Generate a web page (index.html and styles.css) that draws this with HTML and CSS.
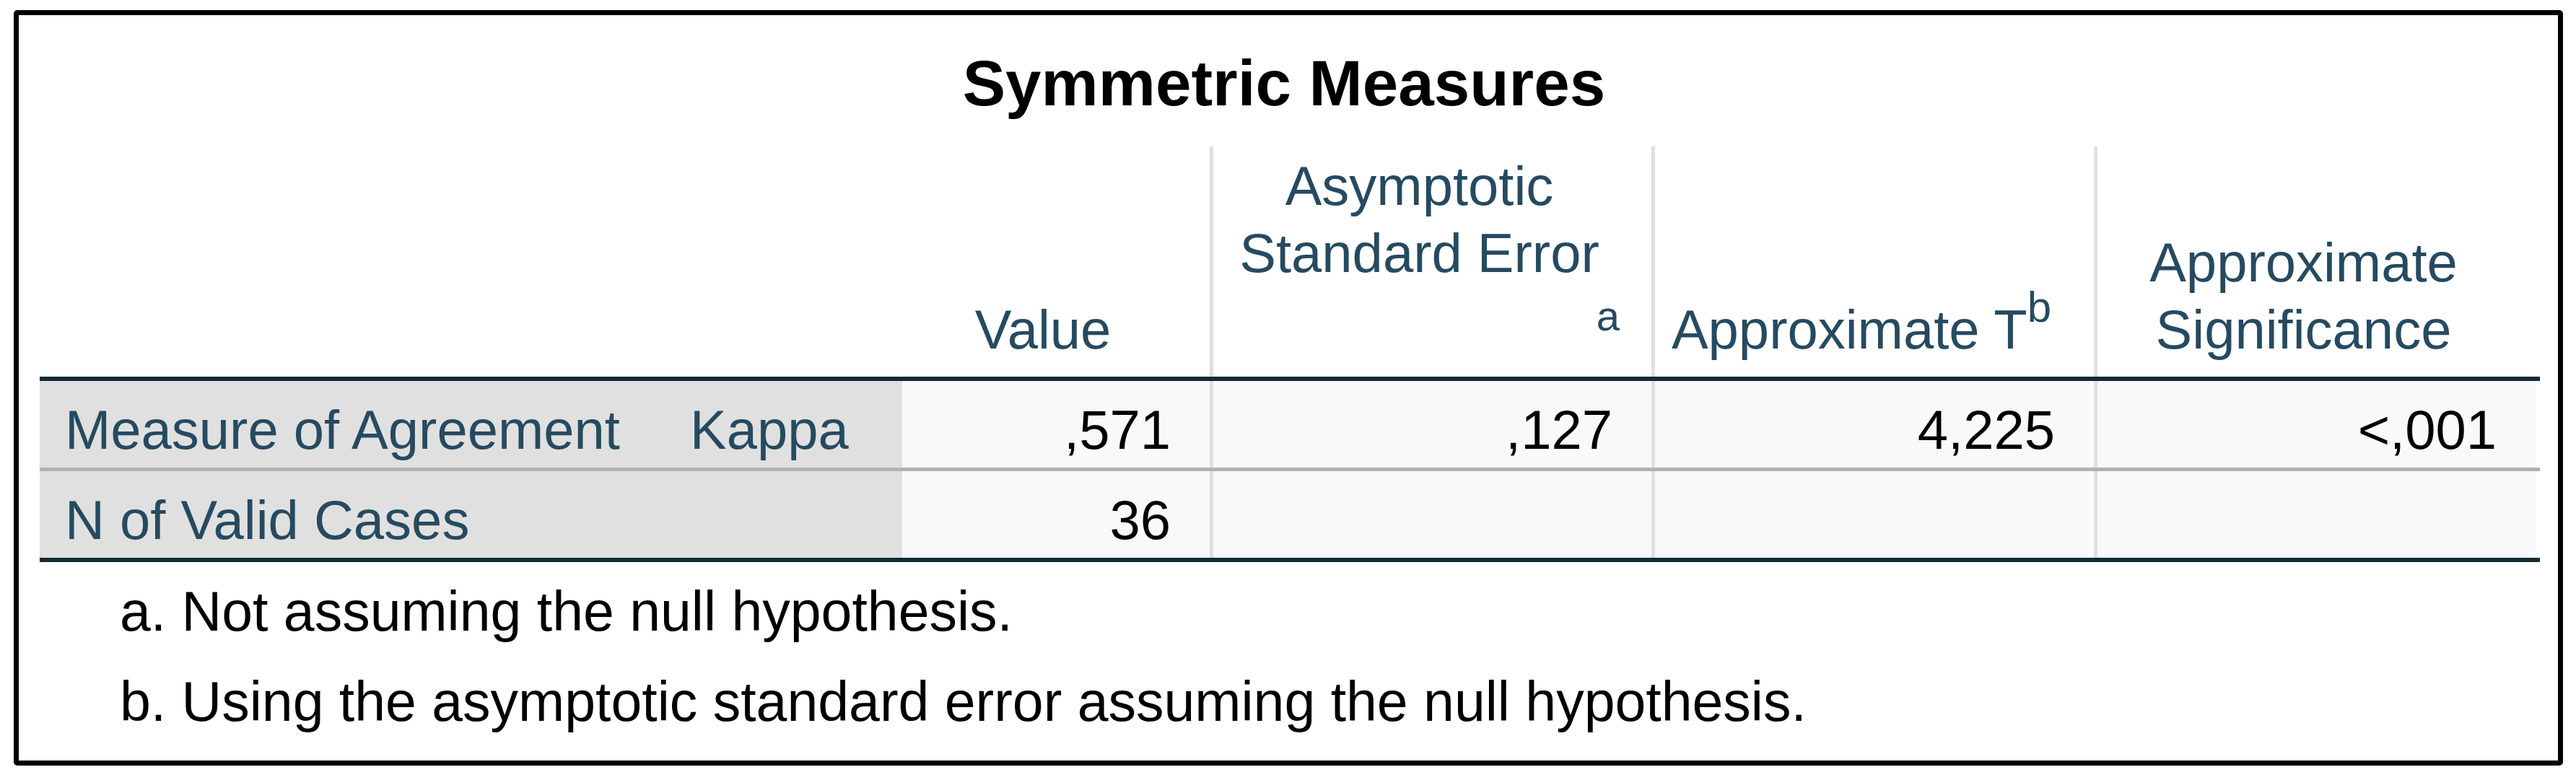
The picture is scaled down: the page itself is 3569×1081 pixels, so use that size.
FILE: index.html
```html
<!DOCTYPE html>
<html lang="en">
<head>
<meta charset="utf-8">
<title>Symmetric Measures</title>
<link rel="stylesheet" href="styles.css">
</head>
<body>
<div class="frame">
  <div class="title">Symmetric Measures</div>
  <div class="grid">
    <div class="hcell corner"></div>
    <div class="hcell">Value</div>
    <div class="hcell sep-l">
      <div>Asymptotic<br>Standard Error</div>
      <div class="supline">a</div>
    </div>
    <div class="hcell sep-l nowrap">
      <div>Approximate T<span class="sup">b</span></div>
    </div>
    <div class="hcell sep-l last">
      <div>Approximate<br>Significance</div>
    </div>

    <div class="rule-dark"></div>

    <div class="stub">Measure of Agreement</div>
    <div class="stub">Kappa</div>
    <div class="data">,571</div>
    <div class="data sep-l">,127</div>
    <div class="data sep-l">4,225</div>
    <div class="data sep-l last">&lt;,001</div>

    <div class="rule-light"></div>

    <div class="stub wide">N of Valid Cases</div>
    <div class="data">36</div>
    <div class="data sep-l"></div>
    <div class="data sep-l"></div>
    <div class="data sep-l last"></div>

    <div class="rule-dark"></div>
  </div>
  <div class="notes">
    <div>a. Not assuming the null hypothesis.</div>
    <div>b. Using the asymptotic standard error assuming the null hypothesis.</div>
  </div>
</div>
</body>
</html>
```

FILE: styles.css
```css
* {
  box-sizing: border-box;
}

body {
  margin: 0;
  background: #ffffff;
  font-family: "Liberation Sans", Arial, sans-serif;
}

.frame {
  width: 3532px;
  margin: 14px 0 0 19px;
  border: 7px solid #000000;
  border-radius: 5px;
  padding: 44px 25px 19px 29px;
  background: #ffffff;
}

.title {
  font-weight: bold;
  font-size: 89px;
  line-height: 100px;
  text-align: center;
  color: #000000;
  padding-right: 16px;
  margin-bottom: 38px;
}

.grid {
  display: grid;
  grid-template-columns: 866px 329px 426px 612px 613px 618px;
  font-size: 76px;
}

.hcell {
  display: flex;
  flex-direction: column;
  justify-content: flex-end;
  padding: 8px 44px 19px 8px;
  text-align: center;
  line-height: 93px;
  color: #264a60;
  background: #ffffff;
}

.hcell.corner {
  grid-column: span 2;
}

.nowrap {
  white-space: nowrap;
}

.supline {
  text-align: right;
  font-size: 58px;
  line-height: 82px;
  padding-bottom: 24px;
}

.sup {
  font-size: 60px;
  line-height: 1;
  vertical-align: 37px;
}

.sep-l {
  border-left: 5px solid #e0e0e0;
}

.last {
  border-right: 6px solid #ffffff;
}

.rule-dark {
  grid-column: 1 / -1;
  height: 6px;
  background: #152935;
}

.rule-light {
  grid-column: 1 / -1;
  height: 5px;
  background: #b1b1b1;
}

.stub {
  background: #e0e0e0;
  color: #264a60;
  padding: 16px 0 0 35px;
  line-height: 104px;
  white-space: nowrap;
}

.stub.wide {
  grid-column: span 2;
}

.data {
  background: #f9f9fb;
  color: #000000;
  text-align: right;
  padding: 16px 54px 0 0;
  line-height: 104px;
  white-space: nowrap;
}

.notes {
  margin-top: 6px;
  padding-left: 111px;
  font-size: 77px;
  line-height: 125px;
  color: #000000;
  white-space: nowrap;
}
```
